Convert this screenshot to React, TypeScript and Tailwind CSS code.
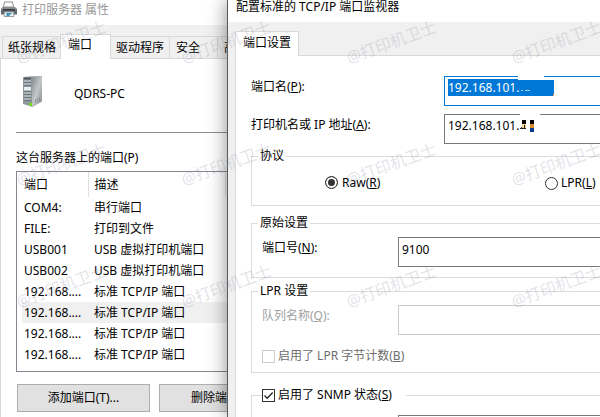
import type { ReactNode } from "react";

const PORTS = [
  { name: "COM4:", description: "串行端口" },
  { name: "FILE:", description: "打印到文件" },
  { name: "USB001", description: "USB 虚拟打印机端口" },
  { name: "USB002", description: "USB 虚拟打印机端口" },
  { name: "192.168....", description: "标准 TCP/IP 端口" },
  { name: "192.168....", description: "标准 TCP/IP 端口", selected: true },
  { name: "192.168....", description: "标准 TCP/IP 端口" },
  { name: "192.168....", description: "标准 TCP/IP 端口" },
];

export default function App() {
  return (
    <div className="relative flex h-screen overflow-hidden bg-white font-['Noto_Sans','Noto_Sans_CJK_SC',sans-serif] text-[12px] leading-[18px] text-black">
      <ServerProperties />
      <PortMonitor />
      <Watermark />
    </div>
  );
}

function ServerProperties() {
  return (
    <section className="flex w-[227px] shrink-0 flex-col overflow-hidden bg-[#f0f0f0]">
      <header className="flex h-[25px] shrink-0 items-start gap-1 bg-white text-[#999]">
        <PrinterIcon />
        <h1 className="whitespace-nowrap pt-px">打印服务器 属性</h1>
      </header>
      <div role="tablist" className="flex h-[34px] shrink-0 items-end whitespace-nowrap border-b border-[#d9d9d9] pl-0.5">
        <button role="tab" className="h-[22px] shrink-0 border-l border-t border-[#d9d9d9] pl-[5px] pr-1">纸张规格</button>
        <button role="tab" aria-selected="true" className="-mb-px h-[25px] shrink-0 border border-b-0 border-[#d9d9d9] bg-white pb-1 pl-[7px] pr-[18px]">端口</button>
        <button role="tab" className="h-[22px] shrink-0 border-r border-t border-[#d9d9d9] px-[5px]">驱动程序</button>
        <button role="tab" className="h-[22px] shrink-0 border-r border-t border-[#d9d9d9] pl-[6px] pr-[17px]">安全</button>
        <button role="tab" className="h-[22px] shrink-0 border-t border-[#d9d9d9] pl-[6px] pr-2">高级</button>
      </div>
      <div className="grow border-l border-[#d9d9d9] bg-white pl-[15px]">
        <div className="flex items-center gap-[31px] border-b border-[#8c8c8c] pb-6 pl-[7px] pt-[17px]">
          <ServerIcon />
          <span className="pt-1">QDRS-PC</span>
        </div>
        <h2 className="mt-4">这台服务器上的端口(P)</h2>
        <div className="mt-1 border border-r-0 border-[#828790] pb-[6px] pl-[5px]">
          <table className="w-full table-fixed whitespace-nowrap text-left">
            <thead>
              <tr className="h-[25px]">
                <th className="w-[66px] border-r border-[#e0e0e0] pl-0.5 font-normal">端口</th>
                <th className="w-[137px] border-r border-[#e0e0e0] pl-[6px] font-normal">描述</th>
                <th />
              </tr>
            </thead>
            <tbody>
              {PORTS.map((port, index) => (
                <tr key={index} className={port.selected ? "h-[21px] bg-[#f0f0f0]" : "h-[21px]"}>
                  <td className="pl-0.5">{port.name}</td>
                  <td className="pl-[6px]">{port.description}</td>
                  <td />
                </tr>
              ))}
            </tbody>
          </table>
        </div>
        <div className="mt-3 flex gap-[9px] whitespace-nowrap pl-px">
          <button className="h-7 w-[133px] shrink-0 border border-[#adadad] bg-[#e1e1e1]">添加端口(T)...</button>
          <button className="h-7 w-[133px] shrink-0 border border-[#adadad] bg-[#e1e1e1] pl-[31px] text-left">删除端口(D)</button>
        </div>
      </div>
    </section>
  );
}

function PortMonitor() {
  return (
    <section className="relative flex min-w-0 grow flex-col border-l border-[#5a5a5a] bg-[#f0f0f0] shadow-[0_0_18px_rgba(0,0,0,0.45)]">
      <header className="h-[22px] shrink-0 bg-white pl-2">
        <h1 className="-mt-0.5 whitespace-nowrap">配置标准的 TCP/IP 端口监视器</h1>
      </header>
      <div role="tablist" className="ml-[7px] flex h-[34px] shrink-0 items-end border-b border-[#d9d9d9]">
        <button role="tab" aria-selected="true" className="-mb-px h-[25px] border border-b-0 border-[#d9d9d9] bg-white px-[7px] pb-0.5">端口设置</button>
      </div>
      <form className="ml-[7px] grow whitespace-nowrap border-l border-[#d9d9d9] bg-white pl-[15px] pt-5">
        <div className="grid grid-cols-[193px_1fr] gap-y-2">
          <label htmlFor="port-name" className="pt-0.5">端口名(<u>P</u>):</label>
          <div className="relative h-[30px] border border-r-0 border-[#0078d7] pl-[3px] pt-0.5">
            <input id="port-name" defaultValue="192.168.101." className="block h-[17px] w-[106px] bg-[#0078d7] text-white outline-none" />
            <svg aria-hidden="true" className="absolute -top-px left-[72px]" width="40" height="22" shapeRendering="crispEdges">
              <path d="M1 0h26v2h10v2H1z" fill="#fff" />
              <path d="M4 14h2v1H4zM8 14h5v1H8z" fill="#a9cdef" />
              <path d="M36 18h1v2h-1z" fill="#e8944a" />
            </svg>
          </div>
          <label htmlFor="host" className="pt-0.5">打印机名或 IP 地址(<u>A</u>):</label>
          <div className="relative h-[30px] border border-r-0 border-[#7a7a7a] pl-[3px] pt-0.5">
            <input id="host" defaultValue="192.168.101." className="block h-[18px] w-full outline-none" />
            <svg aria-hidden="true" className="absolute -top-px left-[75px]" width="22" height="20" shapeRendering="crispEdges">
              <path d="M0 0h20v1H0z" fill="#fff" />
              <path d="M2 6h4v4H2zM10 6h4v4h-4z" fill="#000" />
              <path d="M2 10h4v4H2z" fill="#f7d58c" />
              <path d="M10 10h4v4h-4z" fill="#d9882f" />
              <path d="M10 14h4v4h-4z" fill="#0b3a91" />
              <path d="M0 14h6v1H0zM1 13h1v1H1zM4 11h1v3H4z" fill="#222" />
            </svg>
          </div>
        </div>

        <Group title="协议" className="mt-[3px]">
          <div className="grid grid-cols-[220px_1fr] pb-[13px] pl-[73px] pt-2">
            <label className="flex items-center gap-1">
              <Radio defaultChecked />
              <span>Raw(<u>R</u>)</span>
            </label>
            <label className="flex items-center gap-[3px] pt-px">
              <Radio />
              <span>LPR(<u>L</u>)</span>
            </label>
          </div>
        </Group>

        <Group title="原始设置" className="mt-2">
          <div className="grid grid-cols-[136px_1fr] pb-[10px] pl-[10px] pt-[5px]">
            <label htmlFor="port-number" className="pt-0.5">端口号(<u>N</u>):</label>
            <input id="port-number" defaultValue="9100" className="h-[30px] w-full min-w-0 border border-r-0 border-[#7a7a7a] pb-[5px] pl-[3px] outline-none" />
          </div>
        </Group>

        <Group title="LPR 设置" className="mt-1">
          <div className="grid grid-cols-[136px_1fr] pl-[10px] pt-[5px] text-[#a0a0a0]">
            <label htmlFor="queue" className="pt-0.5">队列名称(<u>Q</u>):</label>
            <input id="queue" disabled className="h-[30px] w-full min-w-0 border border-r-0 border-[#ccc]" />
          </div>
          <label className="mt-3 flex items-center gap-[3px] pb-[7px] pl-[10px] text-[#6d6d6d]">
            <input type="checkbox" disabled className="size-[13px] appearance-none border border-[#ccc] bg-white" />
            <span>启用了 LPR 字节计数(<u>B</u>)</span>
          </label>
        </Group>

        <fieldset className="mt-[13px] border border-r-0 border-[#dcdcdc]">
          <legend className="ml-[10px] pr-[14px]">
            <label className="flex items-center gap-[3px]">
              <span className="grid place-items-center">
                <input type="checkbox" defaultChecked className="col-start-1 row-start-1 size-[13px] appearance-none border border-[#333] bg-white" />
                <svg className="pointer-events-none col-start-1 row-start-1" width="13" height="13" fill="none" stroke="#222" strokeWidth="1.3">
                  <path d="M2.5 6.5 5.2 9.2 10.7 3.5" />
                </svg>
              </span>
              <span>启用了 SNMP 状态(<u>S</u>)</span>
            </label>
          </legend>
          <div className="pl-[146px] pt-[11px]">
            <input aria-label="社区名称" className="h-[30px] w-full border border-r-0 border-[#7a7a7a]" />
          </div>
        </fieldset>
      </form>
    </section>
  );
}

function Group({ title, className, children }: { title: string; className: string; children: ReactNode }) {
  return (
    <fieldset className={`border border-r-0 border-[#dcdcdc] ${className}`}>
      <legend className="ml-[6px] px-0.5">{title}</legend>
      {children}
    </fieldset>
  );
}

function Radio({ defaultChecked }: { defaultChecked?: boolean }) {
  return (
    <input
      type="radio"
      name="protocol"
      defaultChecked={defaultChecked}
      className="size-[13px] appearance-none rounded-full border border-[#333] bg-white checked:bg-[#333] checked:shadow-[inset_0_0_0_2px_white]"
    />
  );
}

function Watermark() {
  return (
    <div aria-hidden="true" className="pointer-events-none absolute inset-0 grid auto-rows-[122px] grid-cols-[repeat(4,165px)] overflow-hidden text-[16px] leading-6 text-[#8c8ca0]/25">
      {Array.from({ length: 12 }, (_, i) => (
        <div key={i} className="pl-[14px] pt-[30px]">
          <span className="inline-block -rotate-[20deg] whitespace-nowrap">@打印机卫士</span>
        </div>
      ))}
    </div>
  );
}

function PrinterIcon() {
  return (
    <svg className="mt-px shrink-0" width="18" height="17" viewBox="0 0 18 17">
      <path d="M4.5 1h8l1 5h-10z" fill="#fff" stroke="#8b8f92" />
      <path d="M1 7.500 2.500 6h12.500l2 1.500V10H1z" fill="#8b8f92" />
      <path d="M1 9h16v4.500H1z" fill="#64696c" />
      <path d="M3 8h12v1.500H3z" fill="#35393c" />
      <path d="M4.5 11h9l.5 4.500H4z" fill="#e9f2f6" stroke="#9a9fa3" />
      <path d="M6.500 12h5v1.500h-2V15h-3z" fill="#3b92b8" />
    </svg>
  );
}

function ServerIcon() {
  return (
    <svg className="shrink-0" width="20" height="32" viewBox="0 0 20 32">
      <defs>
        <linearGradient id="side" x1="0" y1="0" x2="1" y2="1">
          <stop offset="0" stopColor="#858b8d" />
          <stop offset=".5" stopColor="#c3c8c8" />
          <stop offset="1" stopColor="#858b8b" />
        </linearGradient>
      </defs>
      <path d="M0 1 9 0h10v25.500L9.500 31 0 28z" fill="#aab0b2" />
      <path d="M9 1.500 19 .5v25L9 30.500z" fill="url(#side)" />
      <path d="M0 1.500h9v29L0 27.500z" fill="#8f979e" />
      <path d="M1 1.500h7v2H1z" fill="#4f575d" />
      <path d="M1 5h7M1 8h7M1 17h7M1 20h7M1 23h7" stroke="#c9d0d5" />
      <path d="M1 6.500h7M1 9.500h7M1 15.500h7M1 18.500h7M1 21.500h7M1 24.500h7" stroke="#6d757b" />
      <path d="M1 11h7v3.500H1z" fill="#e6eef1" />
      <path d="M12.500 23.500v3M14.500 22.500v3M16.500 21.500v3" stroke="#6f7676" strokeDasharray="1 1" />
      <path d="M6 27h3v3H6z" fill="#6fdc17" />
    </svg>
  );
}
